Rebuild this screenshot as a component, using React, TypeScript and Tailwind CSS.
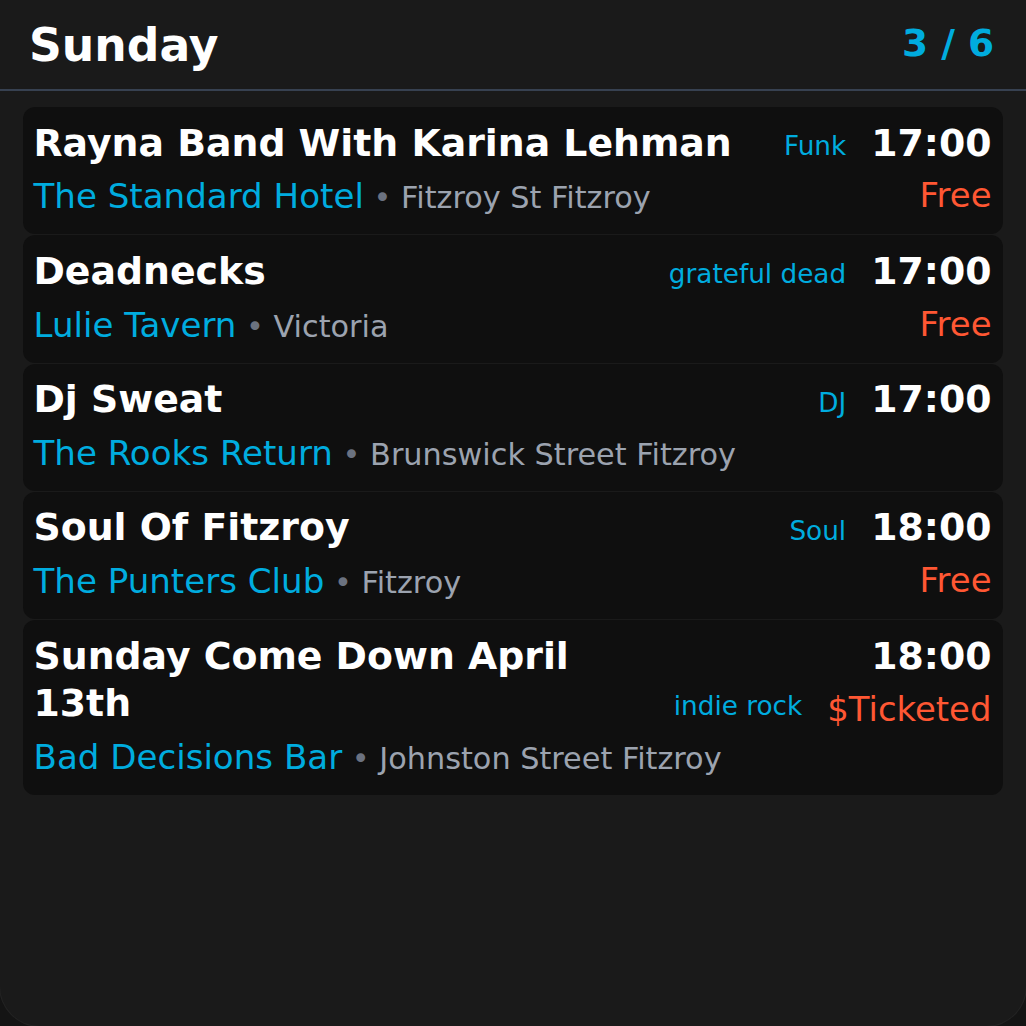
import React from "react";

type Gig = {
  title: string;
  genre?: string;
  time: string;
  venue: string;
  location: string;
  price?: string;
};

const gigs: Gig[] = [
  {
    title: "Rayna Band With Karina Lehman",
    genre: "Funk",
    time: "17:00",
    venue: "The Standard Hotel",
    location: "Fitzroy St Fitzroy",
    price: "Free",
  },
  {
    title: "Deadnecks",
    genre: "grateful dead",
    time: "17:00",
    venue: "Lulie Tavern",
    location: "Victoria",
    price: "Free",
  },
  {
    title: "Dj Sweat",
    genre: "DJ",
    time: "17:00",
    venue: "The Rooks Return",
    location: "Brunswick Street Fitzroy",
  },
  {
    title: "Soul Of Fitzroy",
    genre: "Soul",
    time: "18:00",
    venue: "The Punters Club",
    location: "Fitzroy",
    price: "Free",
  },
  {
    title: "Sunday Come Down April 13th",
    genre: "indie rock",
    time: "18:00",
    venue: "Bad Decisions Bar",
    location: "Johnston Street Fitzroy",
    price: "$Ticketed",
  },
];

function GigCard({ gig }: { gig: Gig }) {
  return (
    <div className="flex items-start rounded-[12px] bg-[#0f0f0f] py-[12.5px] pl-[10.5px] pr-[11.5px]">
      <div className="flex min-w-0 flex-1 flex-col gap-[5px]">
        <div className="flex items-end gap-[12.5px]">
          <div className="min-w-0 flex-1 text-[37.8px] font-bold leading-[46.875px] text-white">
            {gig.title}
          </div>
          {gig.genre && (
            <div className="shrink-0 whitespace-nowrap text-[26.3px] leading-[1.5] text-[#00acdf]">
              {gig.genre}
            </div>
          )}
        </div>
        <div className="whitespace-nowrap text-[34.1px] leading-[1.48] text-[#00acdf]">
          {gig.venue}
          <span className="text-[30.3px] text-[#6b7280]"> • </span>
          <span className="text-[30.3px] text-[#9ca3af]">{gig.location}</span>
        </div>
      </div>
      <div className="ml-[25px] flex shrink-0 flex-col items-end gap-[5px]">
        <div className="whitespace-nowrap text-[37.8px] font-bold leading-[46.875px] text-white">
          {gig.time}
        </div>
        {gig.price && (
          <div className="whitespace-nowrap text-[33.9px] leading-[1.48] text-[#ff5733]">
            {gig.price}
          </div>
        )}
      </div>
    </div>
  );
}

export default function App() {
  return (
    <div
      className="h-[1026px] w-full bg-[#141414]"
      style={{ fontFamily: '"DejaVu Sans", Verdana, sans-serif' }}
    >
      <div className="h-full w-full overflow-hidden rounded-b-[40px] bg-[#1a1a1a] ring-1 ring-[#232323]">
        <div className="flex items-center justify-between border-b-2 border-[#374151] pb-[18px] pl-[29px] pr-[32px] pt-[21px]">
          <div className="text-[45.6px] font-bold leading-[50px] text-white">Sunday</div>
          <div className="-mt-[6px] text-[37.5px] font-bold leading-[1.2] text-[#00acdf]">
            3 / 6
          </div>
        </div>
        <div className="flex flex-col gap-px px-[23px] pt-[16px]">
          {gigs.map((g, i) => (
            <GigCard key={i} gig={g} />
          ))}
        </div>
      </div>
    </div>
  );
}
